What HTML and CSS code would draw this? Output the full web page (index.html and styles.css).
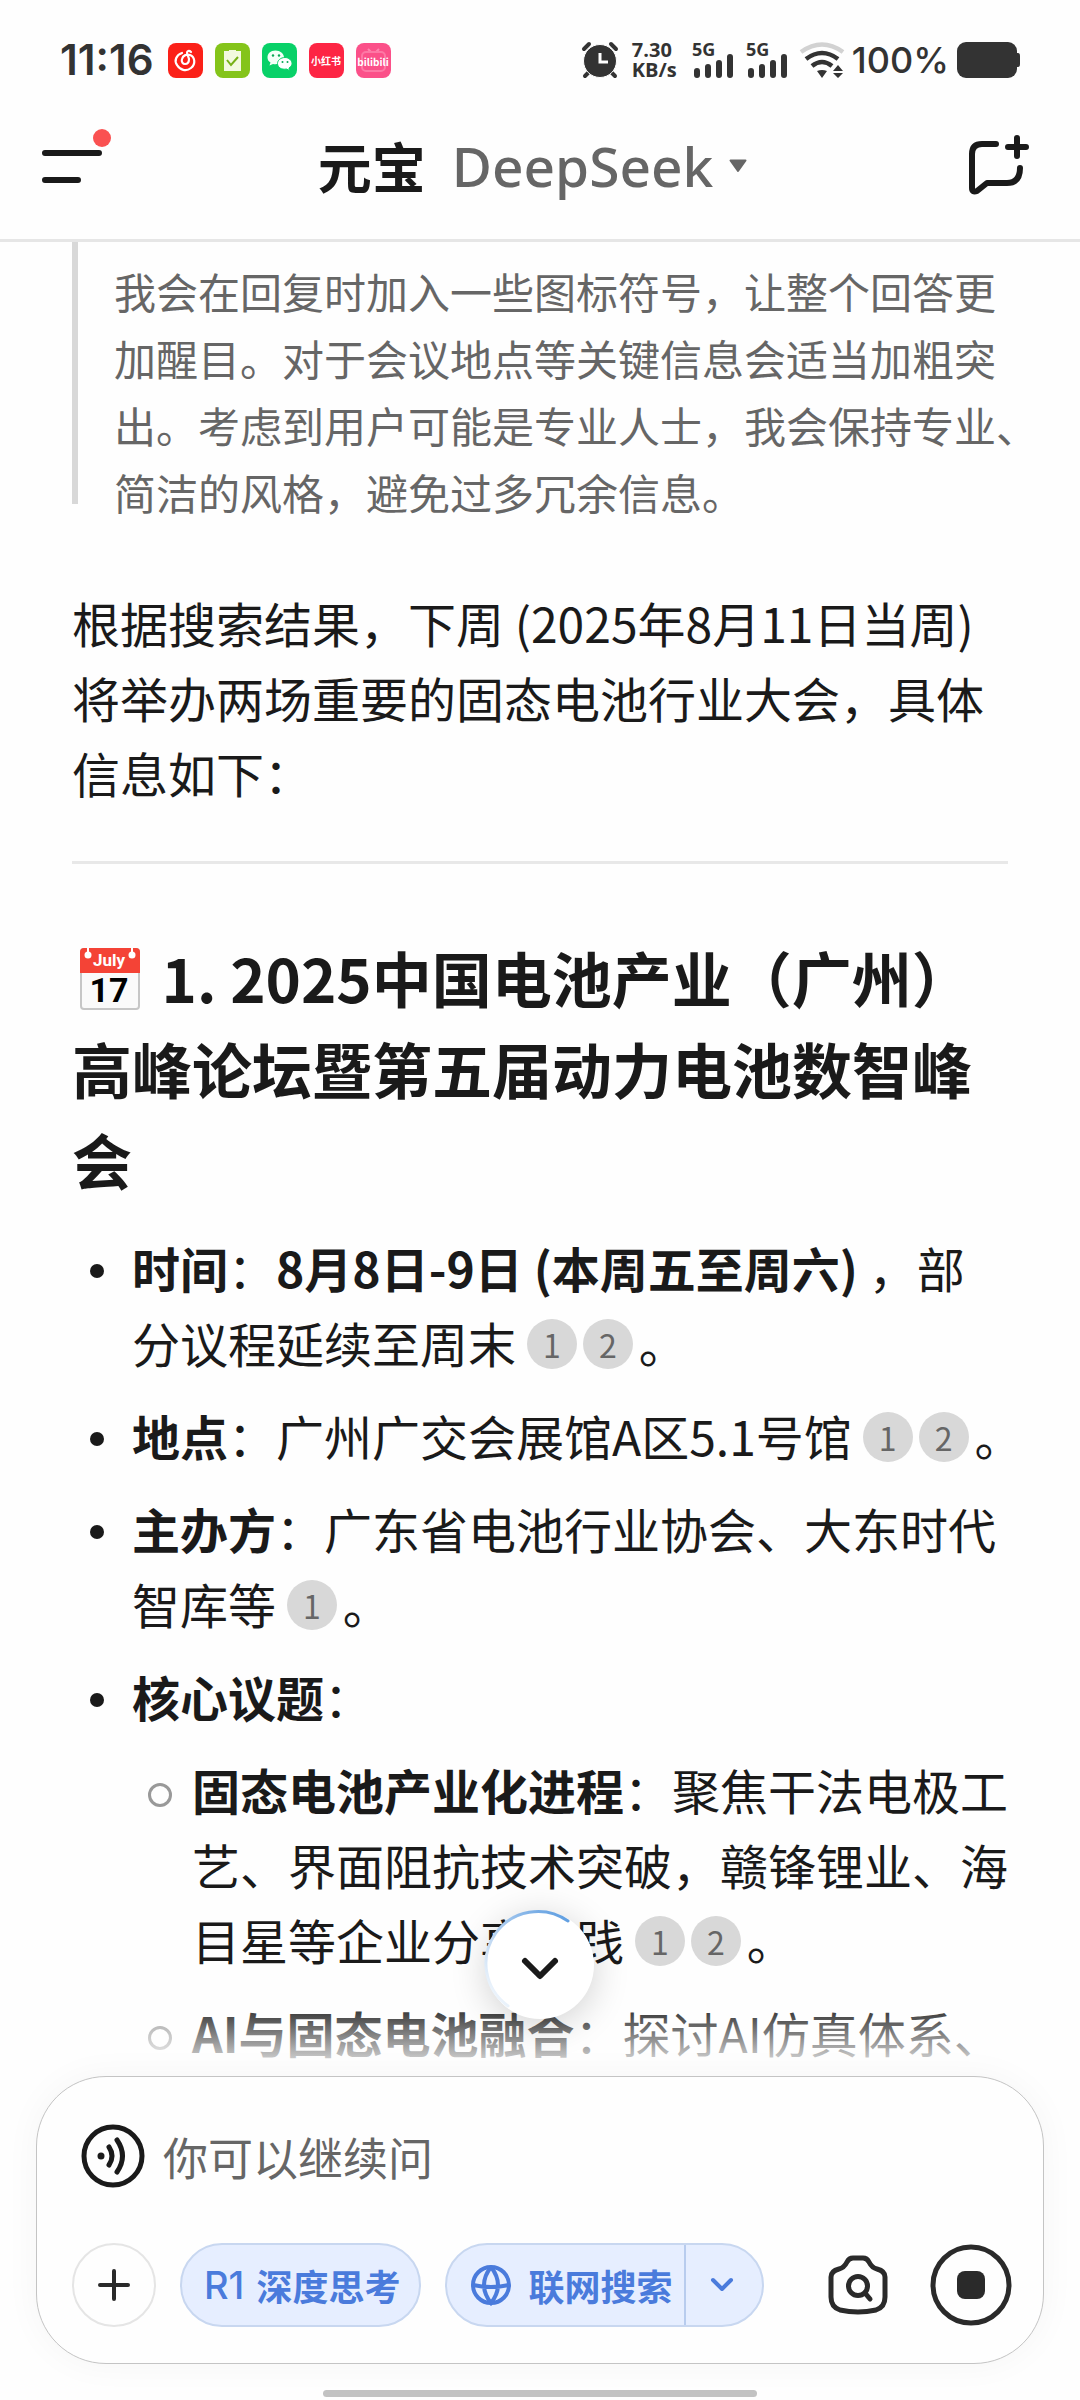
FILE: index.html
```html
<!DOCTYPE html>
<html lang="zh-CN">
<head>
    <meta charset="UTF-8">
    <meta name="viewport" content="width=device-width, initial-scale=1">
    <title>元宝</title>
    <link rel="stylesheet" href="styles.css">
</head>
<body>
<div id="app">
    <div class="status">
        <span class="time">11:16</span>
        <div class="apps">
            <svg class="app" viewBox="0 0 35 35">
                <rect width="35" height="35" rx="8" fill="#fb2018"/>
                <path d="M14 10c-6 2-8 8-5 12 3 5 9 7 14 3 5-4 4-11-1-13-3-1-7 0-8 4-1 3 1 5 3 5 3 0 4-2 4-5l-2-6c0-2 2-3 4-1" fill="none" stroke="#fff" stroke-width="2.2" stroke-linecap="round"/>
            </svg>
            <svg class="app" viewBox="0 0 35 35">
                <rect width="35" height="35" rx="8" fill="#84c41a"/>
                <path d="M9 8h5V7h7v1h5v20H9z" fill="#f2f9df"/>
                <path d="M12 17l4 5 7-8" fill="none" stroke="#76b016" stroke-width="2"/>
            </svg>
            <svg class="app" viewBox="0 0 35 35">
                <rect width="35" height="35" rx="8" fill="#08d168"/>
                <path d="M13.500 7.500c-5 0-8 3-8 7 0 2 1 4 3 5l-1 3 3.500-1.500c6 1 11-2 11-6.500 0-4-4-7-8.500-7z" fill="#f3fff7"/>
                <path d="M23 14.500c-4.500 0-7.500 3-7.500 6 0 4 4 6.500 9 5.500l3 1.500-.5-2.500c2-1 3-3 3-4.500 0-3-3-6-7-6z" fill="#fff" stroke="#08d168"/>
                <g fill="#08a955"><circle cx="11" cy="12.500" r="1.200"/><circle cx="17" cy="12.500" r="1.200"/><circle cx="20.500" cy="19" r="1"/><circle cx="25.500" cy="19" r="1"/></g>
            </svg>
            <svg class="app" viewBox="0 0 35 35">
                <rect width="35" height="35" rx="8" fill="#fd2544"/>
                <text class="app-text" x="17" y="22">小红书</text>
            </svg>
            <svg class="app" viewBox="0 0 35 35">
                <rect width="35" height="35" rx="8" fill="#fb5089"/>
                <path d="M12 6l3 3M23 6l-3 3" stroke="#fd86ae" stroke-width="2"/>
                <rect x="6" y="9" width="23" height="19" rx="4" fill="none" stroke="#fd78a5" stroke-width="2"/>
                <text class="app-text" x="17" y="23">bilibili</text>
            </svg>
        </div>
        <svg class="alarm" viewBox="0 0 36 36">
            <g fill="none" stroke="#333" stroke-width="4" stroke-linecap="round"><path d="M2 7l5-5M29 2l5 5M7 30l-4 4M29 30l4 4"/></g>
            <circle cx="18" cy="19" r="16.500" fill="#333" stroke="#fefefe"/>
            <path d="M18 11v9h8" fill="none" stroke="#fff" stroke-width="3"/>
        </svg>
        <div class="speed"><span>7.30</span><span>KB/s</span></div>
        <svg class="signal" viewBox="0 0 42 36">
            <text class="net" x="0" y="14">5G</text>
            <path d="M5 29v4M16 25v8M27 21v12M38 15v18" stroke="#333" stroke-width="6" stroke-linecap="round"/>
        </svg>
        <svg class="signal" viewBox="0 0 42 36">
            <text class="net" x="0" y="14">5G</text>
            <path d="M5 29v4M16 25v8M27 21v12M38 15v18" stroke="#333" stroke-width="6" stroke-linecap="round"/>
        </svg>
        <svg class="wifi" viewBox="0 0 44 36">
            <g fill="none" stroke="#333" stroke-width="4.500">
                <path d="M1 10Q22-5 43 10" stroke="#d2d2d2"/>
                <path d="M6 17Q22 5 38 17"/>
                <path d="M12 24Q22 16 32 24"/>
            </g>
            <path d="M17 29q5-2 10 0l-5 7zM33 29l5-6 5 6zM33 31h10l-5 5z" fill="#333"/>
        </svg>
        <span class="percent">100%</span>
        <svg class="battery" viewBox="0 0 64 36">
            <rect width="60" height="36" rx="9" fill="#333"/>
            <path d="M59 11h2q2 0 2 3v8q0 3-2 3h-2z" fill="#333"/>
        </svg>
    </div>

    <header class="nav">
        <button class="menu" aria-label="菜单">
            <svg width="70" height="60" viewBox="0 0 70 60">
                <path d="M3 17h54M3 44h33" stroke="#1a1a1a" stroke-width="6" stroke-linecap="round"/>
                <circle cx="60" cy="2" r="9" fill="#fa5151"/>
            </svg>
        </button>
        <button class="model">
            <b>元宝</b>
            <span>DeepSeek</span>
            <svg width="18" height="14" viewBox="0 0 18 14"><path d="M1.500 1.500h15L9 12z" fill="#666" stroke="#666" stroke-width="2" stroke-linejoin="round"/></svg>
        </button>
        <button class="new-chat" aria-label="新对话">
            <svg width="60" height="60" viewBox="0 0 60 60" fill="none" stroke="#1a1a1a" stroke-width="6" stroke-linecap="round" stroke-linejoin="round">
                <path d="M27 8H13Q3 8 3 18v34q0 5 5 3l10-8h20q13 0 13-15"/>
                <path d="M48 2v18M39 11h18"/>
            </svg>
        </button>
    </header>

    <main class="chat">
        <blockquote>我会在回复时加入一些图标符号，让整个回答更<br>加醒目。对于会议地点等关键信息会适当加粗突<br>出。考虑到用户可能是专业人士，我会保持专业、<br>简洁的风格，避免过多冗余信息。</blockquote>
        <p>根据搜索结果，下周 (2025年8月11日当周)<br>将举办两场重要的固态电池行业大会，具体信息如下：</p>
        <hr>
        <h2><svg class="calendar" viewBox="0 0 60 62">
            <rect x="1" y="1" width="58" height="60" rx="3" fill="#fafafa" stroke="#c6c6c6" stroke-width="2"/>
            <path d="M0 25V4q0-4 4-4h52q4 0 4 4v21z" fill="#f44336"/>
            <path d="M8 0v6M52 0v6" stroke="#fff" stroke-width="2"/>
            <circle cx="8" cy="7" r="3.500" fill="#fff"/><circle cx="52" cy="7" r="3.500" fill="#fff"/>
            <text x="29" y="18" class="month">July</text>
            <text x="29" y="54" class="day">17</text>
        </svg> 1. 2025中国电池产业（广州）<br>高峰论坛暨第五届动力电池数智峰会</h2>
        <ul>
            <li><b>时间</b>：<b>8月8日-9日 (本周五至周六)</b> ，部<br>分议程延续至周末 <a href="#" class="ref">1</a><a href="#" class="ref">2</a>。</li>
            <li><b>地点</b>：广州广交会展馆A区5.1号馆 <a href="#" class="ref">1</a><a href="#" class="ref">2</a>。</li>
            <li><b>主办方</b>：广东省电池行业协会、大东时代智库等 <a href="#" class="ref">1</a>。</li>
            <li><b>核心议题</b>：
                <ul>
                    <li><b>固态电池产业化进程</b>：聚焦干法电极工艺、界面阻抗技术突破，赣锋锂业、海目星等企业分享实践 <a href="#" class="ref">1</a><a href="#" class="ref">2</a>。</li>
                    <li><b>AI与固态电池融合</b>：探讨AI仿真体系、</li>
                </ul>
            </li>
        </ul>
        <button class="to-bottom" aria-label="回到底部">
            <svg width="108" height="108" viewBox="0 0 108 108" fill="none" stroke-linecap="round">
                <defs>
                    <linearGradient id="arc" x1="0" y1="1" x2="1" y2="0">
                        <stop offset="0" stop-color="#fff"/>
                        <stop offset="1" stop-color="#5a9be0"/>
                    </linearGradient>
                </defs>
                <path d="M22 95A52 52 0 0 1 82 10" stroke="url(#arc)" stroke-width="3"/>
                <path d="M39 50l15 15 15-15" stroke="#1a1a1a" stroke-width="6" stroke-linejoin="round"/>
            </svg>
        </button>
    </main>

    <footer class="bottom">
        <form class="composer">
            <div class="row ask">
                <button type="button" aria-label="语音">
                    <svg width="64" height="64" viewBox="0 0 64 64" fill="none" stroke="#1a1a1a" stroke-width="5" stroke-linecap="round">
                        <circle cx="32" cy="32" r="29"/>
                        <circle cx="20" cy="32" r="3.500" fill="#1a1a1a" stroke="none"/>
                        <path d="M28 23q6 9 0 18M36 16q11 16 0 32"/>
                    </svg>
                </button>
                <input type="text" placeholder="你可以继续问" aria-label="你可以继续问">
            </div>
            <div class="row tools">
                <button type="button" class="plus" aria-label="添加">
                    <svg width="32" height="32" viewBox="0 0 32 32"><path d="M16 2v28M2 16h28" stroke="#2a2a2a" stroke-width="4" stroke-linecap="round"/></svg>
                </button>
                <button type="button" class="pill think"><span class="r1">R1</span>深度思考</button>
                <div class="pill search">
                    <button type="button" class="web">
                        <svg width="42" height="42" viewBox="0 0 42 42" fill="none" stroke="#4a7bdc" stroke-width="4">
                            <circle cx="21" cy="21" r="18"/>
                            <path d="M21 3Q7 21 21 39Q35 21 21 3M3 21q18 4 36 0"/>
                        </svg>
                        联网搜索
                    </button>
                    <button type="button" class="more" aria-label="搜索范围">
                        <svg width="24" height="16" viewBox="0 0 24 16"><path d="M3 3l9 9 9-9" fill="none" stroke="#4a7bdc" stroke-width="4" stroke-linecap="round" stroke-linejoin="round"/></svg>
                    </button>
                </div>
                <button type="button" class="camera" aria-label="拍照搜索">
                    <svg width="60" height="60" viewBox="0 0 60 60" fill="none" stroke="#2a2a2a" stroke-width="5" stroke-linecap="round" stroke-linejoin="round">
                        <path d="M25 3h10q4 0 6 4 3 6 8 7 8 2 8 8v20q0 10-9 13-18 4-36 0-9-3-9-13V22q0-6 8-8 5-1 8-7 2-4 6-4z"/>
                        <circle cx="30" cy="31" r="9.500"/>
                        <path d="M37 38l5 6"/>
                    </svg>
                </button>
                <button type="button" class="stop" aria-label="停止">
                    <svg width="82" height="82" viewBox="0 0 82 82">
                        <circle cx="41" cy="41" r="38" fill="none" stroke="#2a2a2a" stroke-width="5"/>
                        <rect x="27" y="27" width="28" height="28" rx="8" fill="#2a2a2a"/>
                    </svg>
                </button>
            </div>
        </form>
        <div class="home-bar"></div>
    </footer>
</div>
</body>
</html>
```
FILE: styles.css
```css
* {
    margin: 0;
    padding: 0;
    box-sizing: border-box;
}

body {
    font-family: "Noto Sans CJK SC", sans-serif;
    color: #1a1a1a;
    background-color: #fefefe;
}

button, input {
    border: none;
    background: none;
    font: inherit;
    color: inherit;
    cursor: pointer;
}

button {
    display: flex;
    align-items: center;
}

svg {
    display: block;
    flex: none;
    overflow: visible;
}

ul {
    list-style: none;
}

a {
    color: inherit;
    text-decoration: none;
}

#app {
    display: flex;
    flex-direction: column;
    height: 100vh;
    overflow: hidden;
}

/* 状态栏 */
.status {
    display: flex;
    align-items: center;
    flex: none;
    padding: 36px 59px 0 60px;
    height: 84px;
    color: #333;
    font-family: Inter, sans-serif;
}

.time {
    font-size: 42px;
    font-weight: 600;
    line-height: 48px;
}

.apps {
    display: flex;
    gap: 12px;
    margin-left: 14px;
    margin-right: auto;
}

.app {
    width: 35px;
    height: 35px;
}

.app-text {
    fill: #fff;
    font-family: "Noto Sans CJK SC", sans-serif;
    font-size: 10px;
    font-weight: bold;
    text-anchor: middle;
}

.alarm {
    width: 36px;
    height: 36px;
}

.speed {
    display: flex;
    flex-direction: column;
    width: 44px;
    margin: 0 16px 0 14px;
    font-family: "Open Sans", sans-serif;
    font-size: 20px;
    font-weight: bold;
    line-height: 20px;
}

.signal {
    width: 42px;
    height: 36px;
    margin-right: 12px;
}

.net {
    fill: #333;
    font-family: "Open Sans", sans-serif;
    font-size: 18px;
    font-weight: bold;
}

.wifi {
    width: 44px;
    height: 36px;
}

.percent {
    margin: 0 8px;
    font-size: 36px;
    font-weight: 500;
    line-height: 40px;
}

.battery {
    width: 64px;
    height: 36px;
}

/* 顶部导航 */
.nav {
    display: flex;
    align-items: center;
    justify-content: space-between;
    flex: none;
    height: 158px;
    padding: 8px 51px 0 42px;
    border-bottom: 3px solid #e6e6e6;
}

.model {
    gap: 26px;
    margin-right: 16px;
    font-size: 54px;
    line-height: 72px;
}

.model span {
    font-family: "Noto Sans", sans-serif;
    font-size: 55px;
    font-weight: 500;
    color: #666;
}

.model svg {
    margin-left: -10px;
}

/* 对话内容 */
.chat {
    position: relative;
    flex: 1;
    min-height: 0;
    overflow: hidden;
    padding: 15px 72px 0;
    font-size: 48px;
    line-height: 75px;
}

.chat::after {
    content: "";
    position: absolute;
    left: 0;
    right: 0;
    bottom: 0;
    height: 76px;
    background: linear-gradient(rgba(254, 254, 254, 0), #fefefe);
}

blockquote {
    position: relative;
    margin-right: -36px;
    padding-left: 42px;
    font-size: 42px;
    line-height: 67px;
    color: #666;
}

blockquote::before {
    content: "";
    position: absolute;
    left: 0;
    top: -15px;
    bottom: 21px;
    width: 6px;
    background-color: #d8d8d8;
}

.chat p {
    margin-top: 60px;
}

.chat hr {
    height: 3px;
    margin: 51px 0 67px;
    border: none;
    background-color: #e8e8e8;
}

.chat h2 {
    margin-bottom: 26px;
    font-size: 60px;
    line-height: 91px;
}

.calendar {
    display: inline-block;
    width: 60px;
    height: 62px;
    margin: 0 8px;
    vertical-align: -7px;
}

.month, .day {
    font-family: Roboto, sans-serif;
    font-weight: bold;
    text-anchor: middle;
}

.month {
    fill: #fff;
    font-size: 17px;
}

.day {
    fill: #000;
    font-size: 34px;
}

/* 行尾标点可以超出正文右边 */
.chat > ul {
    margin-right: -20px;
}

.chat li {
    position: relative;
    margin-bottom: 18px;
    padding-left: 60px;
}

.chat li::before {
    content: "";
    position: absolute;
    left: 18px;
    top: 34px;
    width: 14px;
    height: 14px;
    border-radius: 50%;
    background-color: #1a1a1a;
}

.chat li ul {
    margin-top: 18px;
}

.chat li li::before {
    left: 16px;
    top: 31px;
    width: 18px;
    height: 18px;
    border: 3px solid #999;
    background: none;
}

.ref {
    display: inline-block;
    width: 50px;
    height: 50px;
    margin-right: 6px;
    border-radius: 50%;
    background-color: #d8d8d8;
    color: #666;
    font-size: 32px;
    line-height: 50px;
    text-align: center;
    vertical-align: 5px;
}

.to-bottom {
    position: absolute;
    left: 50%;
    bottom: 57px;
    z-index: 1;
    margin-left: -54px;
    border-radius: 50%;
    background-color: #fff;
    box-shadow: 0 6px 36px rgba(0, 0, 0, .18);
}

/* 输入区 */
.bottom {
    position: relative;
    flex: none;
    padding: 0 36px 3px;
}

.composer {
    padding: 46px 35px 36px;
    border: 1px solid #c4c4c4;
    border-radius: 70px;
    background-color: #fefefe;
    box-shadow: 0 0 36px rgba(0, 0, 0, .04);
}

.row {
    display: flex;
    align-items: center;
}

.ask {
    gap: 18px;
    padding-left: 9px;
}

.ask input {
    flex: 1;
    min-width: 0;
    height: 66px;
    font-size: 45px;
    outline: none;
}

.ask input::placeholder {
    color: #666;
    opacity: 1;
}

.tools {
    margin-top: 54px;
}

.plus {
    justify-content: center;
    width: 84px;
    height: 84px;
    border: 2px solid #e5e5e5;
    border-radius: 50%;
}

.pill {
    height: 84px;
    margin-left: 24px;
    border: 2px solid #c8d7f0;
    border-radius: 42px;
    background-color: #e6eeff;
    color: #4a7bdc;
    font-size: 36px;
    font-weight: bold;
    white-space: nowrap;
}

.think {
    gap: 12px;
    padding: 0 19px 0 22px;
}

.r1 {
    font-family: Inter, sans-serif;
    font-size: 38px;
    font-weight: 500;
}

.search {
    display: flex;
}

.web {
    gap: 16px;
    padding: 0 12px 0 23px;
    border-right: 2px solid #b8ccee;
}

.more {
    padding: 0 28px 0 24px;
}

.camera {
    margin-left: auto;
}

.stop {
    margin: 0 -4px 0 42px;
}

.home-bar {
    width: 43%;
    height: 7px;
    margin: 26px auto 0;
    border-radius: 4px;
    background-color: #c2c2c2;
}
```
